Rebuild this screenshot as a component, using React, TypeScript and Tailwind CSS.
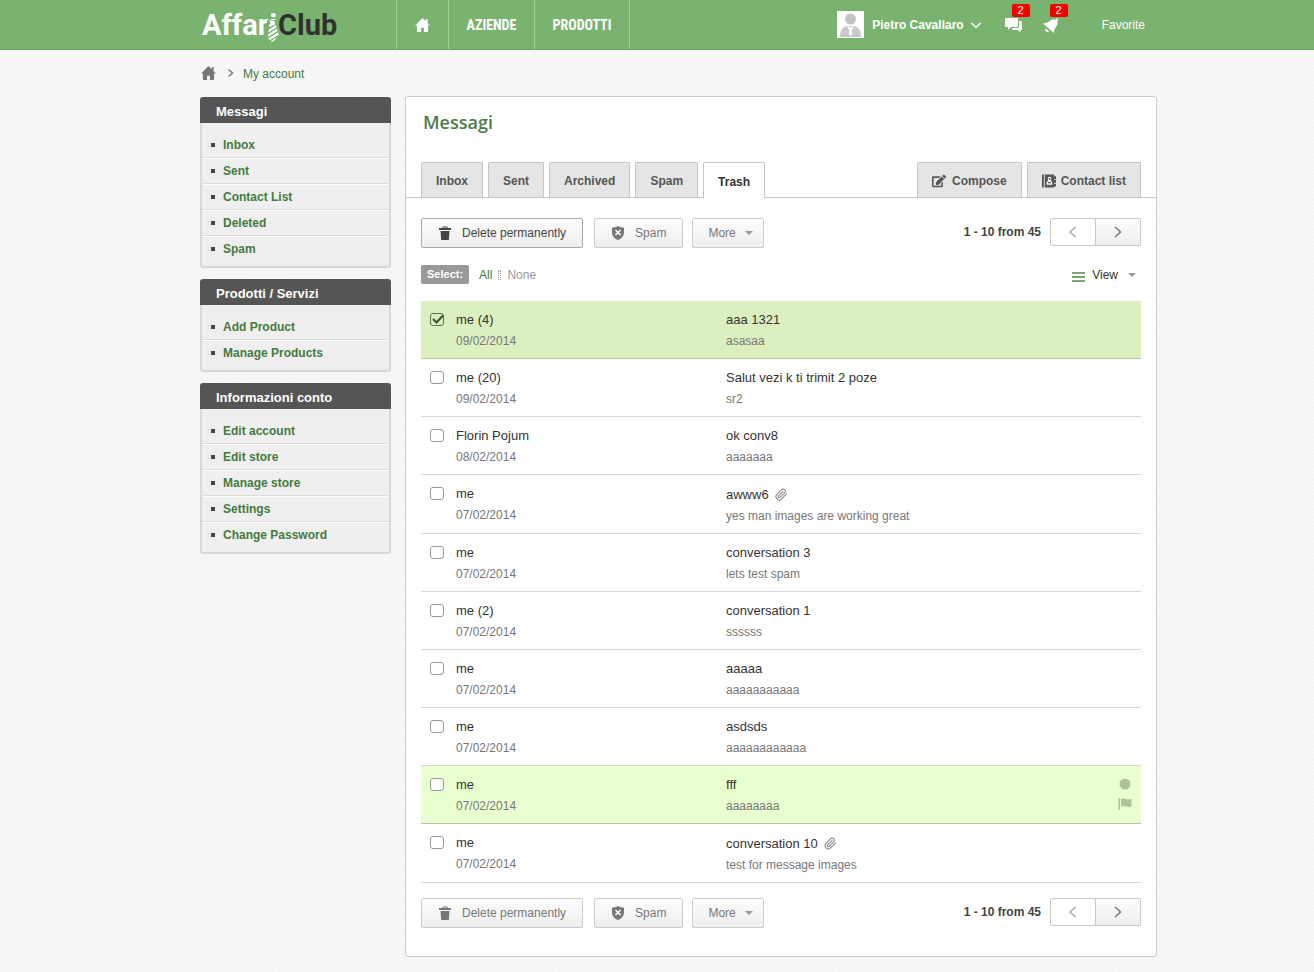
import { useState, type ReactNode } from 'react';
import { FaEdit } from 'react-icons/fa';
import { LuPaperclip } from 'react-icons/lu';

type IconProps = { className?: string };

const HomeIcon = ({ className = '' }: IconProps) => (
  <svg viewBox="0 0 16 15" fill="currentColor" aria-hidden="true" className={className}>
    <path d="M8 0 0 8h2v7h4.500v-4.500h3V15H14V8h2l-2.500-2.500V1H11.500v2.500z" />
  </svg>
);

const TrashIcon = ({ className = '' }: IconProps) => (
  <svg viewBox="0 0 14 14" fill="currentColor" aria-hidden="true" className={className}>
    <path d="M1 2h3l1-1.500h4L10 2h3v2H1zM5.300 1.400 5 2h4l-.3-.6zM2.500 5h9l-.7 9H3.200z" />
  </svg>
);

const ShieldIcon = ({ className = '' }: IconProps) => (
  <svg viewBox="0 0 14 14" aria-hidden="true" className={className}>
    <path fill="currentColor" d="M7 0c2 1.200 4 1.500 6 1.500v5C13 10 10.500 12.500 7 14 3.500 12.500 1 10 1 6.500v-5C3 1.500 5 1.200 7 0z" />
    <path stroke="#fff" strokeWidth="1.500" d="m4.500 4 5 5m0-5-5 5" />
  </svg>
);

const ContactBookIcon = ({ className = '' }: IconProps) => (
  <svg viewBox="0 0 15 14" aria-hidden="true" className={className}>
    <path fill="currentColor" d="M0 0h2v14H0zM3 0h10v2h2v3h-2v1h2v3h-2v1h2v3h-2v1H3z" />
    <path fill="#fff" d="M8 2.500a2 2 0 0 1 1.500 3.200V7c1 .3 1.500 1 1.500 2v2H5V9c0-1 .5-1.700 1.500-2V5.700A2 2 0 0 1 8 2.500z" />
    <circle cx="8" cy="4.700" r="1" fill="currentColor" />
    <path fill="currentColor" d="M6.500 8h3v1.500h-3z" />
  </svg>
);

const ChatIcon = ({ className = '' }: IconProps) => (
  <svg viewBox="0 0 18 15" fill="currentColor" aria-hidden="true" className={className}>
    <path d="M1 0h11a1 1 0 0 1 1 1v7a1 1 0 0 1-1 1H6l-3 3V9H1a1 1 0 0 1-1-1V1a1 1 0 0 1 1-1z" />
    <path d="M14 3h2a1 1 0 0 1 1 1v7a1 1 0 0 1-1 1h-.5v2.500L12.500 12H8a1 1 0 0 1-1-1v-1h6a1 1 0 0 0 1-1z" />
  </svg>
);

const BellIcon = ({ className = '' }: IconProps) => (
  <svg viewBox="0 0 16 16" fill="currentColor" aria-hidden="true" className={className}>
    <path d="M0 5.500C3 5.500 5.500 4 8 2c1.500-1.200 3.500-1 4.500-.2L14 .3l1.500 1.400-1.300 1.500c1 1.500.8 3-.4 4.600C12 10 10.800 12.500 10.800 15z" />
    <path d="M3 10.500 6 13.500a2 2 0 0 1-3-3z" />
  </svg>
);

const AvatarIcon = ({ className = '' }: IconProps) => (
  <svg viewBox="0 0 27 27" aria-hidden="true" className={className}>
    <path fill="#fff" d="M0 0h27v27H0z" />
    <circle cx="13.500" cy="8" r="5.500" fill="#c4c4c8" />
    <path fill="#c9c9cd" d="M3 26c0-7 3-11 8-11h5c5 0 8 4 8 11z" />
    <path fill="#fff" d="m11 15 2.500 2 2.500-2 .5 2-2 2 1 4-2 2-2-2 1-4-2-2z" />
  </svg>
);

const Chevron = ({ d, className = '' }: IconProps & { d: string }) => (
  <svg viewBox="0 0 12 12" fill="none" stroke="currentColor" strokeWidth="1.500" aria-hidden="true" className={className}>
    <path d={d} />
  </svg>
);

const Caret = ({ className = '' }: IconProps) => (
  <svg viewBox="0 0 8 4" fill="currentColor" aria-hidden="true" className={className}>
    <path d="M0 0h8L4 4z" />
  </svg>
);

function Logo() {
  return (
    <a href="#" className="flex h-[49px] w-[196px] shrink-0 items-center pt-[2px] pl-[2px] font-[Roboto,sans-serif] text-[29px] leading-none font-bold text-white">
      Affar
      <span className="relative px-[1px]">
        i
        <svg viewBox="0 0 14 22" className="absolute top-[9px] -left-[2px] h-[22px] w-[14px]" aria-hidden="true">
          <path fill="#7ab370" d="M1 0h10v22H1z" />
          <path fill="#fff" d="M3.500.5h4.500l1.500 3.500-5.500 3-1.500-1.500 2-2zM9.800 5l.7 2.300-8 5.200.2-2.800zM10.800 8.500l.8 2.400-9.600 6 .3-2.600zM12 12.500l.8 2.200L4 20l-2-1.500zM10.500 17.500 9 20l-3 2-1.200-1z" />
        </svg>
      </span>
      <span className="text-[#2e3330]">Club</span>
    </a>
  );
}

function Badge({ children }: { children: ReactNode }) {
  return (
    <span className="absolute -top-[14px] left-[7px] flex h-[13px] w-[18px] items-center justify-center rounded-[2px] bg-[#f80000] text-[11px] leading-none text-white">
      {children}
    </span>
  );
}

function Header() {
  return (
    <header className="h-[50px] border-b border-[#68a35e] bg-[#7ab370] text-white">
      <div className="mx-auto flex max-w-[1000px] items-center pl-[43px]">
        <Logo />
        <nav className="flex h-[49px] flex-none border-l border-[#a2d698] font-['Roboto_Condensed','Liberation_Sans_Narrow',Roboto,sans-serif] text-[14px] font-bold">
          <a href="#" aria-label="Home" className="flex w-[52px] items-center justify-center border-r border-[#a2d698]">
            <HomeIcon className="h-[14px] w-[15px]" />
          </a>
          <a href="#" className="flex w-[86px] items-center justify-center border-r border-[#a2d698] pt-[2px]">AZIENDE</a>
          <a href="#" className="flex w-[95px] items-center justify-center border-r border-[#a2d698] pt-[2px]">PRODOTTI</a>
        </nav>
        <div className="ml-auto flex items-center pr-3 text-[12px]">
          <button type="button" className="flex items-center font-bold">
            <AvatarIcon className="mr-2 h-[27px] w-[27px]" />
            Pietro Cavallaro
            <Chevron d="m1.500 4 4.500 4.500L10.500 4" className="ml-[6px] h-3 w-3" />
          </button>
          <button type="button" aria-label="Messages" className="relative mt-[2px] ml-[23px]">
            <ChatIcon className="h-[15px] w-[18px]" />
            <Badge>2</Badge>
          </button>
          <button type="button" aria-label="Notifications" className="relative mt-[2px] ml-5">
            <BellIcon className="h-4 w-4" />
            <Badge>2</Badge>
          </button>
          <a href="#" className="ml-[43px]">Favorite</a>
        </div>
      </div>
    </header>
  );
}

const menus = [
  { title: 'Messagi', items: ['Inbox', 'Sent', 'Contact List', 'Deleted', 'Spam'] },
  { title: 'Prodotti / Servizi', items: ['Add Product', 'Manage Products'] },
  { title: 'Informazioni conto', items: ['Edit account', 'Edit store', 'Manage store', 'Settings', 'Change Password'] },
];

function Sidebar() {
  return (
    <aside className="flex w-[191px] shrink-0 flex-col gap-[11px] pt-[1px]">
      {menus.map((menu) => (
        <section key={menu.title}>
          <h2 className="h-[26px] rounded-t-[3px] bg-[#555] pl-4 text-[13px] leading-[29px] font-bold text-white">{menu.title}</h2>
          <ul className="rounded-b-[3px] border-2 border-t-0 border-[#d8d8d8] bg-[#efefef] pt-[9px] pb-1">
            {menu.items.map((item) => (
              <li key={item} className="h-[26px] border-b border-[#dadada] text-[12px] font-bold text-[#457a3e] shadow-[0_1px_0_#fff] last:border-transparent last:shadow-none">
                <a href="#" className="flex h-full items-center pt-[1px] pl-[9px]">
                  <span className="mr-2 h-1 w-1 bg-[#444]" />
                  {item}
                </a>
              </li>
            ))}
          </ul>
        </section>
      ))}
    </aside>
  );
}

const tabClass = 'flex h-[35px] items-center rounded-t-[2px] border border-b-0 border-[#c6c6c6] bg-[#e5e5e5] px-[14px] pt-[2px] text-[#555]';

function Tabs() {
  return (
    <div className="flex h-[36px] gap-[5px] border-b border-[#c6c6c6] px-[15px] text-[12px] font-bold">
      {['Inbox', 'Sent', 'Archived', 'Spam'].map((t) => (
        <button key={t} type="button" className={tabClass}>{t}</button>
      ))}
      <button type="button" className="flex h-[36px] items-center rounded-t-[2px] border border-b-0 border-[#c6c6c6] bg-white px-[14px] pt-[3px] text-[#333]">Trash</button>
      <button type="button" className={`${tabClass} ml-auto`}>
        <FaEdit className="mr-[6px] h-[14px] w-[14px]" />
        Compose
      </button>
      <button type="button" className={tabClass}>
        <ContactBookIcon className="mr-[5px] h-[14px] w-[14px]" />
        Contact list
      </button>
    </div>
  );
}

function Toolbar({ active = false }: { active?: boolean }) {
  const base = 'flex h-[30px] items-center rounded-[2px] border bg-linear-to-b from-[#fdfdfd] to-[#eee]';
  return (
    <div className="flex items-start text-[12px] text-[#777]">
      <button type="button" className={`${base} mr-[11px] px-4 ${active ? 'border-[#aaa] text-[#444]' : 'border-[#ccc]'}`}>
        <TrashIcon className="mr-[10px] h-[14px] w-[14px]" />
        Delete permanently
      </button>
      <button type="button" className={`${base} mr-[9px] border-[#ccc] px-4`}>
        <ShieldIcon className="mr-[10px] h-[14px] w-[14px]" />
        Spam
      </button>
      <button type="button" className={`${base} border-[#ccc] px-[15px]`}>
        More
        <Caret className="-mr-[5px] ml-[9px] h-1 w-2 text-[#999]" />
      </button>
      <div className="ml-auto flex items-center">
        <span className="mr-[9px] font-bold text-[#444]">1 - 10 from 45</span>
        <button type="button" aria-label="Previous page" className="flex h-[28px] w-[46px] items-center justify-center rounded-l-[2px] border border-[#c8c8c8] bg-white text-[#aaa]">
          <Chevron d="M8.500 1 3 6l5.500 5" className="h-3 w-3" />
        </button>
        <button type="button" aria-label="Next page" className="flex h-[28px] w-[45px] items-center justify-center rounded-r-[2px] border border-l-0 border-[#c8c8c8] bg-linear-to-b from-[#fdfdfd] to-[#eee] text-[#777]">
          <Chevron d="M3 1l5.500 5L3 11" className="h-3 w-3" />
        </button>
      </div>
    </div>
  );
}

type Message = { from: string; date: string; subject: string; text: string; clip?: boolean; fresh?: boolean };

const messages: Message[] = [
  { from: 'me (4)', date: '09/02/2014', subject: 'aaa 1321', text: 'asasaa' },
  { from: 'me (20)', date: '09/02/2014', subject: 'Salut vezi k ti trimit 2 poze', text: 'sr2' },
  { from: 'Florin Pojum', date: '08/02/2014', subject: 'ok conv8', text: 'aaaaaaa' },
  { from: 'me', date: '07/02/2014', subject: 'awww6', text: 'yes man images are working great', clip: true },
  { from: 'me', date: '07/02/2014', subject: 'conversation 3', text: 'lets test spam' },
  { from: 'me (2)', date: '07/02/2014', subject: 'conversation 1', text: 'ssssss' },
  { from: 'me', date: '07/02/2014', subject: 'aaaaa', text: 'aaaaaaaaaaa' },
  { from: 'me', date: '07/02/2014', subject: 'asdsds', text: 'aaaaaaaaaaaa' },
  { from: 'me', date: '07/02/2014', subject: 'fff', text: 'aaaaaaaa', fresh: true },
  { from: 'me', date: '07/02/2014', subject: 'conversation 10', text: 'test for message images', clip: true },
];

function MessageTable() {
  const [selected, setSelected] = useState<number[]>([0]);
  const toggle = (i: number) => setSelected((s) => (s.includes(i) ? s.filter((n) => n !== i) : [...s, i]));
  return (
    <table className="w-full table-fixed border-separate border-spacing-0">
      <colgroup>
        <col className="w-[35px]" />
        <col className="w-[270px]" />
        <col />
        <col className="w-[40px]" />
      </colgroup>
      <tbody>
        {messages.map((m, i) => {
          const on = selected.includes(i);
          const cell = `border-b align-top ${on || m.fresh ? 'border-[#b5c9a0]' : 'border-[#d8d8d8]'} ${m.clip ? 'h-[59px]' : 'h-[58px]'}`;
          const top = m.clip ? 'pt-[9px]' : 'pt-2';
          return (
            <tr key={i} className={on ? 'bg-[#dcefbf]' : m.fresh ? 'bg-[#eaffcf]' : 'bg-white'}>
              <td className={`${cell} pt-[12px] pl-[9px]`}>
                <span className="relative block h-[13px] w-[14px]">
                  <input
                    type="checkbox"
                    aria-label={`Select ${m.subject}`}
                    checked={on}
                    onChange={() => toggle(i)}
                    className="block h-[13px] w-[14px] appearance-none rounded-[3px] border border-[#999] bg-white checked:border-[#5c7050] checked:bg-transparent"
                  />
                  {on && (
                    <svg viewBox="0 0 14 13" fill="none" stroke="#3f4f38" strokeWidth="2" className="pointer-events-none absolute top-0 left-0 h-[13px] w-[14px]" aria-hidden="true">
                      <path d="m3 6 3.500 3.500L13 2.500" />
                    </svg>
                  )}
                </span>
              </td>
              <td className={`${cell} pt-2`}>
                <div className="text-[13px] leading-[21px] text-[#333]">{m.from}</div>
                <div className="text-[12px] leading-[23px] text-[#777]">{m.date}</div>
              </td>
              <td className={`${cell} ${top}`}>
                <div className="flex items-center text-[13px] leading-[21px] text-[#333]">
                  {m.subject}
                  {m.clip && <LuPaperclip className="ml-[6px] h-[13px] w-[13px] text-[#888]" aria-label="Attachment" />}
                </div>
                <div className="text-[12px] leading-[23px] text-[#777]">{m.text}</div>
              </td>
              <td className={cell}>
                {m.fresh && (
                  <div className="ml-auto flex w-[23px] flex-col items-center gap-2 pt-3 pr-[9px] text-[#adc49b]">
                    <svg viewBox="0 0 12 12" className="h-[12px] w-[14px]" aria-hidden="true">
                      <circle cx="6" cy="6" r="5.500" fill="currentColor" />
                    </svg>
                    <svg viewBox="0 0 14 12" fill="currentColor" className="h-[12px] w-[14px]" aria-hidden="true">
                      <path d="M.5 0H2v12H.5zM3 1c2-1 3.500-.5 5 0s3 .5 5.500 0v7.500c-2 .5-4 .5-5.500 0s-3-1-5 0z" />
                    </svg>
                  </div>
                )}
              </td>
            </tr>
          );
        })}
      </tbody>
    </table>
  );
}

export default function App() {
  return (
    <div className="min-h-screen bg-[#f8f8f8] bg-[repeating-linear-gradient(45deg,#f9f9f9_0_1px,#f5f5f5_1px_3px)] pb-[15px] font-['Liberation_Sans',Arial,sans-serif]">
      <Header />
      <div className="mx-auto max-w-[1000px] pl-[43px]">
        <nav aria-label="Breadcrumb" className="flex h-[46px] items-center text-[12px] text-[#457a3e]">
          <a href="#" aria-label="Home" className="ml-[1px] -mt-[1px] text-[#777]">
            <HomeIcon className="h-[14px] w-[15px]" />
          </a>
          <Chevron d="m3.500 2.500 4 3.500-4 3.500" className="mr-[6px] ml-[9px] h-3 w-3 text-[#777]" />
          <a href="#" className="pt-[2px]">My account</a>
        </nav>
        <div className="flex items-start gap-[14px]">
          <Sidebar />
          <main className="min-w-0 flex-1 rounded-[3px] border border-[#ccc] bg-white pb-7">
            <h1 className="h-[65px] pt-[13px] pl-[17px] font-['Open_Sans',sans-serif] text-[18px] leading-[25px] font-semibold text-[#4c7d46]">Messagi</h1>
            <Tabs />
            <div className="px-[15px] pt-5">
              <Toolbar active />
              <div className="flex h-[53px] items-center text-[12px]">
                <span className="mr-[10px] flex h-[19px] items-center rounded-[2px] bg-[#999] px-[6px] text-[11px] font-bold text-white">Select:</span>
                <button type="button" className="text-[#457a3e]">All</button>
                <span className="mx-[6px] h-[10px] w-[3px] border-x border-dotted border-[#999]" />
                <button type="button" className="text-[#999]">None</button>
                <button type="button" className="ml-auto flex items-center pr-[5px] text-[#333]">
                  <span className="mt-1 mr-[7px] flex w-[13px] flex-col gap-[2px]">
                    <span className="h-[2px] bg-[#7da572]" />
                    <span className="h-[2px] bg-[#7da572]" />
                    <span className="h-[2px] bg-[#7da572]" />
                  </span>
                  View
                  <Caret className="ml-[10px] h-1 w-2 text-[#999]" />
                </button>
              </div>
              <MessageTable />
              <div className="pt-[15px]">
                <Toolbar />
              </div>
            </div>
          </main>
        </div>
      </div>
    </div>
  );
}
